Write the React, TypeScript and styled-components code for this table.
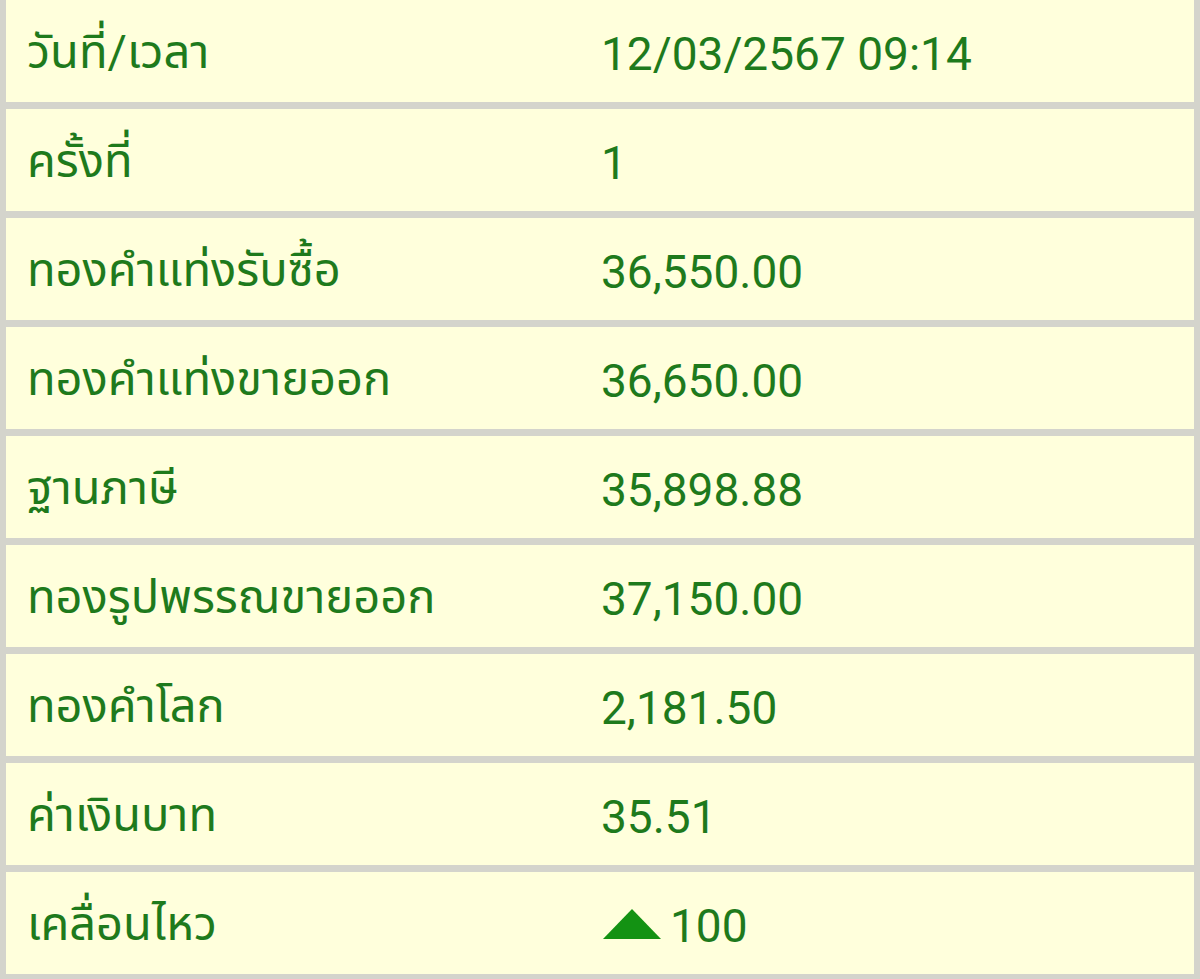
import React from "react";
import styled, { createGlobalStyle } from "styled-components";

const GlobalStyle = createGlobalStyle`
  html, body {
    margin: 0;
    padding: 0;
    background: #d4d4cc;
  }
`;

const Table = styled.div`
  display: flex;
  flex-direction: column;
  gap: 7px;
  padding: 0 6px 5px 6px;
  background-color: #d4d4cc;
  font-family: Roboto, "Noto Sans Thai", "Noto Sans", sans-serif;
  color: #1e7a1c;
`;

const Row = styled.div`
  display: grid;
  grid-template-columns: 574px 1fr;
  align-items: center;
  box-sizing: border-box;
  height: 102px;
  padding: 5px 21px 0 21px;
  background-color: #ffffdc;
`;

const Label = styled.div`
  font-size: 47px;
  white-space: nowrap;
`;

const Value = styled.div`
  display: flex;
  align-items: center;
  font-size: 46px;
  white-space: nowrap;
`;

const Arrow = styled.svg`
  width: 58px;
  height: 30px;
  margin: -4px 9px 0 2px;
`;

type Item = { label: string; value: string; up?: boolean };

const rows: Item[] = [
  { label: "วันที่/เวลา", value: "12/03/2567 09:14" },
  { label: "ครั้งที่", value: "1" },
  { label: "ทองคำแท่งรับซื้อ", value: "36,550.00" },
  { label: "ทองคำแท่งขายออก", value: "36,650.00" },
  { label: "ฐานภาษี", value: "35,898.88" },
  { label: "ทองรูปพรรณขายออก", value: "37,150.00" },
  { label: "ทองคำโลก", value: "2,181.50" },
  { label: "ค่าเงินบาท", value: "35.51" },
  { label: "เคลื่อนไหว", value: "100", up: true },
];

const App: React.FC = () => {
  return (
    <>
      <GlobalStyle />
      <Table>
        {rows.map((r) => (
          <Row key={r.label}>
            <Label>{r.label}</Label>
            <Value>
              {r.up && (
                <Arrow viewBox="0 0 58 30">
                  <polygon points="29,0 58,30 0,30" fill="#139213" />
                </Arrow>
              )}
              {r.value}
            </Value>
          </Row>
        ))}
      </Table>
    </>
  );
};

export default App;
